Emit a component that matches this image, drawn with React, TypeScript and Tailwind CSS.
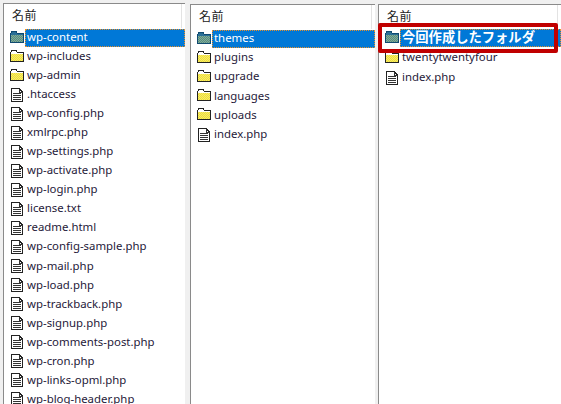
const FONT = "font-['Noto_Sans','Noto_Sans_CJK_JP',sans-serif]";

function FolderIcon({ open }: { open?: boolean }) {
  const id = open ? "ditherBlue" : "ditherYellow";
  return (
    <svg width="16" height="14" viewBox="0 0 16 14" shapeRendering="crispEdges" className="mb-[2px] shrink-0">
      <defs>
        <pattern id={id} width="2" height="2" patternUnits="userSpaceOnUse">
          <rect width="2" height="2" fill={open ? "#7fa8a0" : "#fff25a"} />
          <rect width="1" height="1" fill={open ? "#5a9078" : "#e6d84a"} />
          <rect x="1" y="1" width="1" height="1" fill={open ? "#5a9078" : "#e6d84a"} />
        </pattern>
      </defs>
      <path
        d="M1.5 12.5V3.5L3 1.5H7L8.5 3.5H14.5V12.5Z"
        fill={open ? "#2a6f96" : "#fff"}
        stroke={open ? "#0f4a70" : "#222"}
      />
      <rect x="2" y="5" width="12" height="7" fill={`url(#${id})`} />
    </svg>
  );
}

function FileIcon() {
  return (
    <svg width="16" height="16" viewBox="0 0 16 16" shapeRendering="crispEdges" className="shrink-0">
      <path d="M2.5 1.5H10L13.5 5V14.5H2.5Z" fill="#fff" stroke="#222" />
      <path d="M10 1.5V5H13.5M4 6.5H12M4 8.5H12M4 10.5H12M4 12.5H12" fill="none" stroke="#333" />
    </svg>
  );
}

type Row = { name: string; kind: "folder" | "file"; selected?: boolean };

function Panel({ rows, header, big, rowClass }: { rows: Row[]; header: string; big?: boolean; rowClass: string }) {
  return (
    <div className="relative h-full overflow-hidden border-l border-t border-[#8a8a8a] bg-white">
      <div className={`flex items-center pl-[8px] text-[12px] tracking-[0.5px] text-[#222] ${header}`}>
        <span>名前</span>
        <div className="ml-auto mr-[3px] h-full w-px bg-[#e3e3e3]" />
      </div>
      {rows.map((r) => (
        <div key={r.name} className={`flex items-center pl-[4px] ${rowClass}`}>
          <div className="flex w-[17px] shrink-0 justify-center">
            {r.kind === "folder" ? <FolderIcon open={r.selected} /> : <FileIcon />}
          </div>
          <div
            className={
              r.selected
                ? `flex h-[18px] flex-1 items-center border border-dotted border-[#e8902a] bg-[#0078d7] pl-[1px] text-white ${big ? "text-[13.3px] font-bold" : "pb-[2px] text-[11.4px]"}`
                : "mb-[2px] ml-[2px] text-[11.4px] text-[#1f1a3a]"
            }
          >
            {r.name}
          </div>
        </div>
      ))}
    </div>
  );
}

const first: Row[] = [
  { name: "wp-content", kind: "folder", selected: true },
  { name: "wp-includes", kind: "folder" },
  { name: "wp-admin", kind: "folder" },
  ...[
    ".htaccess",
    "wp-config.php",
    "xmlrpc.php",
    "wp-settings.php",
    "wp-activate.php",
    "wp-login.php",
    "license.txt",
    "readme.html",
    "wp-config-sample.php",
    "wp-mail.php",
    "wp-load.php",
    "wp-trackback.php",
    "wp-signup.php",
    "wp-comments-post.php",
    "wp-cron.php",
    "wp-links-opml.php",
    "wp-blog-header.php",
  ].map((name): Row => ({ name, kind: "file" })),
];

const second: Row[] = [
  { name: "themes", kind: "folder", selected: true },
  { name: "plugins", kind: "folder" },
  { name: "upgrade", kind: "folder" },
  { name: "languages", kind: "folder" },
  { name: "uploads", kind: "folder" },
  { name: "index.php", kind: "file" },
];

const third: Row[] = [
  { name: "今回作成したフォルダ", kind: "folder", selected: true },
  { name: "twentytwentyfour", kind: "folder" },
  { name: "index.php", kind: "file" },
];

export default function App() {
  return (
    <div className={`relative flex h-[404px] w-[561px] overflow-hidden bg-[#f0f0f0] pt-[3px] ${FONT}`}>
      <div className="ml-[3px] h-full w-[182px]">
        <Panel rows={first} header="h-[24px]" rowClass="h-[19.05px]" />
      </div>
      <div className="ml-[5px] h-full w-[185px] pt-px">
        <Panel rows={second} header="h-[24px]" rowClass="h-[19.2px]" />
      </div>
      <div className="ml-[3px] h-full w-[183px] pt-px">
        <Panel rows={third} header="h-[23px]" big rowClass="h-[20px]" />
      </div>
      <div className="absolute left-[378px] top-[23px] h-[30px] w-[180px] rounded-[2px] border-[4px] border-[#c00000]" />
    </div>
  );
}
